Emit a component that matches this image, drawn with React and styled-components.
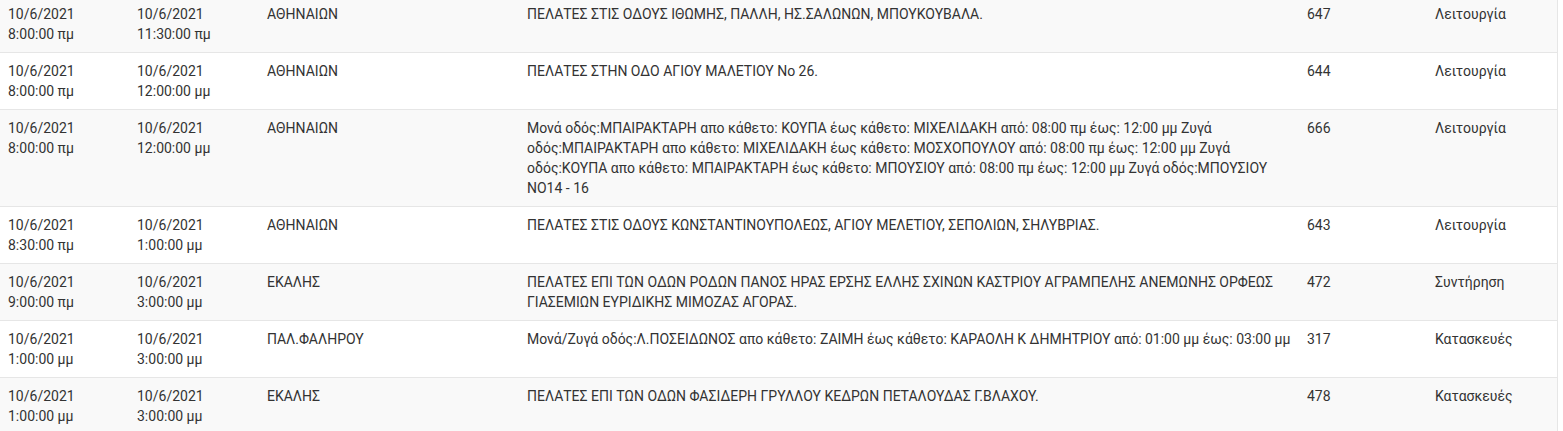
import React from 'react';
import styled, { createGlobalStyle } from 'styled-components';

const GlobalStyle = createGlobalStyle`
  html, body {
    margin: 0;
    padding: 0;
    background: #fff;
    overflow: hidden;
  }
  body {
    font-family: Roboto, 'Noto Sans', 'Liberation Sans', sans-serif;
  }
`;

const Page = styled.div`
  width: 1563px;
  height: 431px;
  overflow: hidden;
  background: #fff;
`;

const Table = styled.table`
  width: 1557px;
  margin-top: -5px;
  border-collapse: collapse;
  table-layout: fixed;
  font-size: 14px;
  line-height: 20px;
  color: #333;
  border-right: 1px solid #e6e6e6;
`;

const Col = styled.col`
  width: ${(p) => p.$w}px;
`;

const Row = styled.tr`
  background: ${(p) => (p.$shaded ? '#f9f9f9' : '#fff')};
  border-top: 1px solid #e6e6e6;
`;

const Cell = styled.td`
  vertical-align: top;
  padding: 8px 8px;
  word-wrap: break-word;
`;

const Stamp = styled.span`
  display: block;
  white-space: nowrap;
`;

const widths = [129, 130, 260, 780, 128, 130];

const rows = [
  {
    from: ['10/6/2021', '8:00:00 πμ'],
    to: ['10/6/2021', '11:30:00 πμ'],
    area: 'ΑΘΗΝΑΙΩΝ',
    text: 'ΠΕΛΑΤΕΣ ΣΤΙΣ ΟΔΟΥΣ ΙΘΩΜΗΣ, ΠΑΛΛΗ, ΗΣ.ΣΑΛΩΝΩΝ, ΜΠΟΥΚΟΥΒΑΛΑ.',
    num: '647',
    kind: 'Λειτουργία',
  },
  {
    from: ['10/6/2021', '8:00:00 πμ'],
    to: ['10/6/2021', '12:00:00 μμ'],
    area: 'ΑΘΗΝΑΙΩΝ',
    text: 'ΠΕΛΑΤΕΣ ΣΤΗΝ ΟΔΟ ΑΓΙΟΥ ΜΑΛΕΤΙΟΥ Νο 26.',
    num: '644',
    kind: 'Λειτουργία',
  },
  {
    from: ['10/6/2021', '8:00:00 πμ'],
    to: ['10/6/2021', '12:00:00 μμ'],
    area: 'ΑΘΗΝΑΙΩΝ',
    text: 'Μονά οδός:ΜΠΑΙΡΑΚΤΑΡΗ απο κάθετο: ΚΟΥΠΑ έως κάθετο: ΜΙΧΕΛΙΔΑΚΗ από: 08:00 πμ έως: 12:00 μμ Ζυγά οδός:ΜΠΑΙΡΑΚΤΑΡΗ απο κάθετο: ΜΙΧΕΛΙΔΑΚΗ έως κάθετο: ΜΟΣΧΟΠΟΥΛΟΥ από: 08:00 πμ έως: 12:00 μμ Ζυγά οδός:ΚΟΥΠΑ απο κάθετο: ΜΠΑΙΡΑΚΤΑΡΗ έως κάθετο: ΜΠΟΥΣΙΟΥ από: 08:00 πμ έως: 12:00 μμ Ζυγά οδός:ΜΠΟΥΣΙΟΥ ΝΟ14 - 16',
    num: '666',
    kind: 'Λειτουργία',
  },
  {
    from: ['10/6/2021', '8:30:00 πμ'],
    to: ['10/6/2021', '1:00:00 μμ'],
    area: 'ΑΘΗΝΑΙΩΝ',
    text: 'ΠΕΛΑΤΕΣ ΣΤΙΣ ΟΔΟΥΣ ΚΩΝΣΤΑΝΤΙΝΟΥΠΟΛΕΩΣ, ΑΓΙΟΥ ΜΕΛΕΤΙΟΥ, ΣΕΠΟΛΙΩΝ, ΣΗΛΥΒΡΙΑΣ.',
    num: '643',
    kind: 'Λειτουργία',
  },
  {
    from: ['10/6/2021', '9:00:00 πμ'],
    to: ['10/6/2021', '3:00:00 μμ'],
    area: 'ΕΚΑΛΗΣ',
    text: 'ΠΕΛΑΤΕΣ ΕΠΙ ΤΩΝ ΟΔΩΝ ΡΟΔΩΝ ΠΑΝΟΣ ΗΡΑΣ ΕΡΣΗΣ ΕΛΛΗΣ ΣΧΙΝΩΝ ΚΑΣΤΡΙΟΥ ΑΓΡΑΜΠΕΛΗΣ ΑΝΕΜΩΝΗΣ ΟΡΦΕΩΣ ΓΙΑΣΕΜΙΩΝ ΕΥΡΙΔΙΚΗΣ ΜΙΜΟΖΑΣ ΑΓΟΡΑΣ.',
    num: '472',
    kind: 'Συντήρηση',
  },
  {
    from: ['10/6/2021', '1:00:00 μμ'],
    to: ['10/6/2021', '3:00:00 μμ'],
    area: 'ΠΑΛ.ΦΑΛΗΡΟΥ',
    text: 'Μονά/Ζυγά οδός:Λ.ΠΟΣΕΙΔΩΝΟΣ απο κάθετο: ΖΑΙΜΗ έως κάθετο: ΚΑΡΑΟΛΗ Κ ΔΗΜΗΤΡΙΟΥ από: 01:00 μμ έως: 03:00 μμ',
    num: '317',
    kind: 'Κατασκευές',
  },
  {
    from: ['10/6/2021', '1:00:00 μμ'],
    to: ['10/6/2021', '3:00:00 μμ'],
    area: 'ΕΚΑΛΗΣ',
    text: 'ΠΕΛΑΤΕΣ ΕΠΙ ΤΩΝ ΟΔΩΝ ΦΑΣΙΔΕΡΗ ΓΡΥΛΛΟΥ ΚΕΔΡΩΝ ΠΕΤΑΛΟΥΔΑΣ Γ.ΒΛΑΧΟΥ.',
    num: '478',
    kind: 'Κατασκευές',
  },
];

const App = () => (
  <Page>
    <GlobalStyle />
    <Table>
      <colgroup>
        {widths.map((w, i) => <Col key={i} $w={w} />)}
      </colgroup>
      <tbody>
        {rows.map((r, i) => (
          <Row key={i} $shaded={i % 2 === 0}>
            <Cell>
              {r.from.map((s) => <Stamp key={s}>{s}</Stamp>)}
            </Cell>
            <Cell>
              {r.to.map((s) => <Stamp key={s}>{s}</Stamp>)}
            </Cell>
            <Cell>{r.area}</Cell>
            <Cell>{r.text}</Cell>
            <Cell>{r.num}</Cell>
            <Cell>{r.kind}</Cell>
          </Row>
        ))}
      </tbody>
    </Table>
  </Page>
);

export default App;
